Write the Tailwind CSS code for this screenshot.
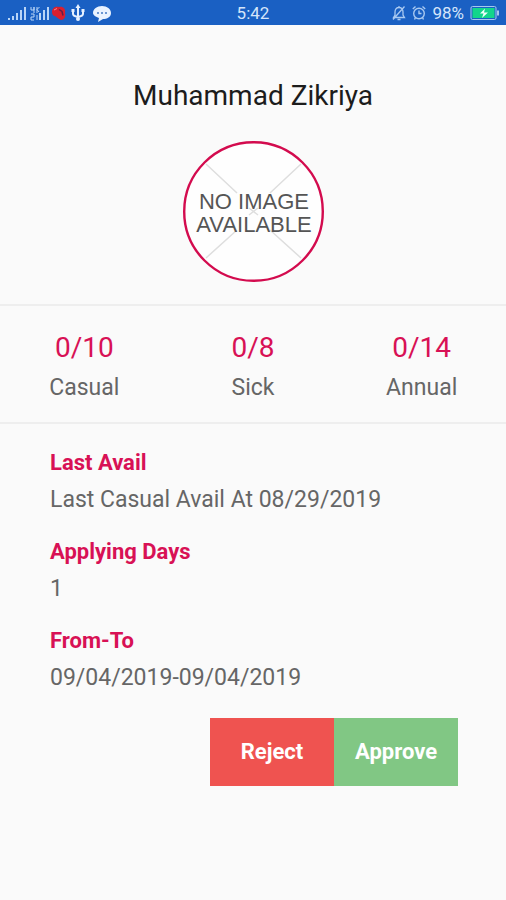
<!DOCTYPE html>
<html lang="en">
<head>
<meta charset="utf-8">
<meta name="viewport" content="width=device-width, initial-scale=1">
<title>Leave request</title>
<script src="https://cdn.jsdelivr.net/npm/@tailwindcss/browser@4"></script>
</head>
<body class="min-h-screen bg-[#fafafa] font-[Roboto,sans-serif] text-[#666666]">
<header class="grid h-[25px] grid-cols-[1fr_auto_1fr] items-center bg-[#1a60c3] px-[6px] text-[17px] leading-6 text-[#d5e5fa]">
  <div class="flex items-center">
    <svg class="h-[18px] w-[106px]" viewBox="0 0 106 18" fill="none" aria-hidden="true">
      <g fill="#b9d5f7">
        <path d="M2 14h2v2h-2zM6 12h2v4h-2zM10 9h2v7h-2zM14 6h2v10h-2zM18 3h2v13h-2z"/>
        <path d="M33 9h2v7h-2zM37 6h2v10h-2zM41 3h2v13h-2z"/>
      </g>
      <path d="M25 3v3h3V3M28 3v6M25 10h3v3h-3v3h3M31 3v6M33.500 3L31 5.500 33 8M31 11v5" stroke="#b9d5f7"/>
      <path d="M46 8c0-4 3-6 7-5 4-1 7 2 6 6 1 4-1 7-4 7-3-1-4-3-6-4-2 0-3-2-3-4z" fill="#d9202f"/>
      <path d="M53 5.500l3 2 1 4" stroke="#641e48" stroke-width="1.500"/>
      <path d="M48 6l3-1.500" stroke="#f58a8f"/>
      <path d="M72 15V4M67 7v3q0 2 5 3 5-1 5-3V7" stroke="#e6f1ff" stroke-width="2"/>
      <path d="M72 0l-2.500 4h5zM65.500 5h3v3h-3zM75.500 5h3v3h-3z" fill="#e6f1ff"/>
      <circle cx="72" cy="15" r="2" fill="#e6f1ff"/>
      <path d="M96 2c5 0 9 3 9 7s-4 6-8 6l-5 3 1-4c-3-1-6-3-6-5 0-4 4-7 9-7z" fill="#e9f3ff"/>
      <path d="M91 8h2v2h-2zM95 8h2v2h-2zM99 8h2v2h-2z" fill="#6b97d3"/>
    </svg>
  </div>
  <time>5:42</time>
  <div class="flex items-center justify-end gap-[6px]">
    <svg class="h-4 w-[14px]" viewBox="0 0 14 16" fill="none" stroke="#a9c9f1" stroke-width="1.300" aria-hidden="true">
      <path d="M1.500 12.500h11L11 10V7c0-3-1.500-4.500-4-4.500S3 4 3 7v3zM5.500 14.500h3M7 1v2M12.500 1.500L1 14.500"/>
    </svg>
    <svg class="h-4 w-[14px]" viewBox="0 0 14 16" fill="none" stroke="#a9c9f1" stroke-width="1.400" aria-hidden="true">
      <circle cx="7" cy="8.500" r="5.300"/><path d="M7 5.500v3h2.500M.8 4L3.500 1.500M13.200 4L10.500 1.500M3.500 12.500L2.500 14.500M10.500 12.500l1 2"/>
    </svg>
    <span>98%</span>
    <svg class="h-4 w-[30px]" viewBox="0 0 30 16" fill="none" aria-hidden="true">
      <rect x="1" y="1.500" width="25" height="13" rx="1.500" stroke="#a5c8ee"/>
      <path d="M27 5.500h2v5h-2z" fill="#a5c8ee"/>
      <rect x="2.500" y="3" width="22" height="10" fill="#12d58b"/>
      <path d="M15 3.500l-5 5h3.500L12 13l6-5.500h-4z" fill="#effff9"/>
    </svg>
  </div>
</header>
<main>
  <section class="flex flex-col items-center gap-[29px] border-b-2 border-[#eeeeee] pt-[55px] pb-[22px]">
    <h1 class="text-[28px] leading-8 text-[#1c1c1c]">Muhammad Zikriya</h1>
    <svg class="size-[141px]" viewBox="0 0 141 141" role="img" aria-label="No image available">
      <circle cx="70.500" cy="70.500" r="69.300" fill="#fefefe" stroke="#d30b4e" stroke-width="2.400"/>
      <path d="M23 23L54 52M118 23L87 52M23 117L54 89M118 117L87 89M66 67l9 7M75 67l-9 7" stroke="#dedede" stroke-width="1.500"/>
      <g fill="#555555" font-family="Liberation Sans, Arial, sans-serif" font-size="22" text-anchor="middle">
        <text x="71" y="68">NO IMAGE</text>
        <text x="71" y="91">AVAILABLE</text>
      </g>
    </svg>
  </section>
  <section class="grid grid-cols-3 border-b-2 border-[#eeeeee] pt-[26px] pb-5 text-center">
    <div class="flex flex-col gap-[10px]">
      <strong class="text-[28px] leading-8 font-normal text-[#d81155]">0/10</strong>
      <span class="text-[23px] leading-7">Casual</span>
    </div>
    <div class="flex flex-col gap-[10px]">
      <strong class="text-[28px] leading-8 font-normal text-[#d81155]">0/8</strong>
      <span class="text-[23px] leading-7">Sick</span>
    </div>
    <div class="flex flex-col gap-[10px]">
      <strong class="text-[28px] leading-8 font-normal text-[#d81155]">0/14</strong>
      <span class="text-[23px] leading-7">Annual</span>
    </div>
  </section>
  <section class="pt-[25px] pr-12 pl-[50px]">
    <dl class="flex flex-col gap-6 leading-7">
      <div class="flex flex-col gap-[9px]">
        <dt class="text-[22px] font-bold text-[#d81155]">Last Avail</dt>
        <dd class="text-[23px]">Last Casual Avail At 08/29/2019</dd>
      </div>
      <div class="flex flex-col gap-[9px]">
        <dt class="text-[22px] font-bold text-[#d81155]">Applying Days</dt>
        <dd class="text-[23px]">1</dd>
      </div>
      <div class="flex flex-col gap-[9px]">
        <dt class="text-[22px] font-bold text-[#d81155]">From-To</dt>
        <dd class="text-[23px]">09/04/2019-09/04/2019</dd>
      </div>
    </dl>
    <div class="mt-[26px] flex justify-end text-[22px] leading-7 font-bold text-white">
      <button type="button" class="w-[124px] bg-[#ef5350] py-5">Reject</button>
      <button type="button" class="w-[124px] bg-[#81c784] py-5">Approve</button>
    </div>
  </section>
</main>
</body>
</html>
